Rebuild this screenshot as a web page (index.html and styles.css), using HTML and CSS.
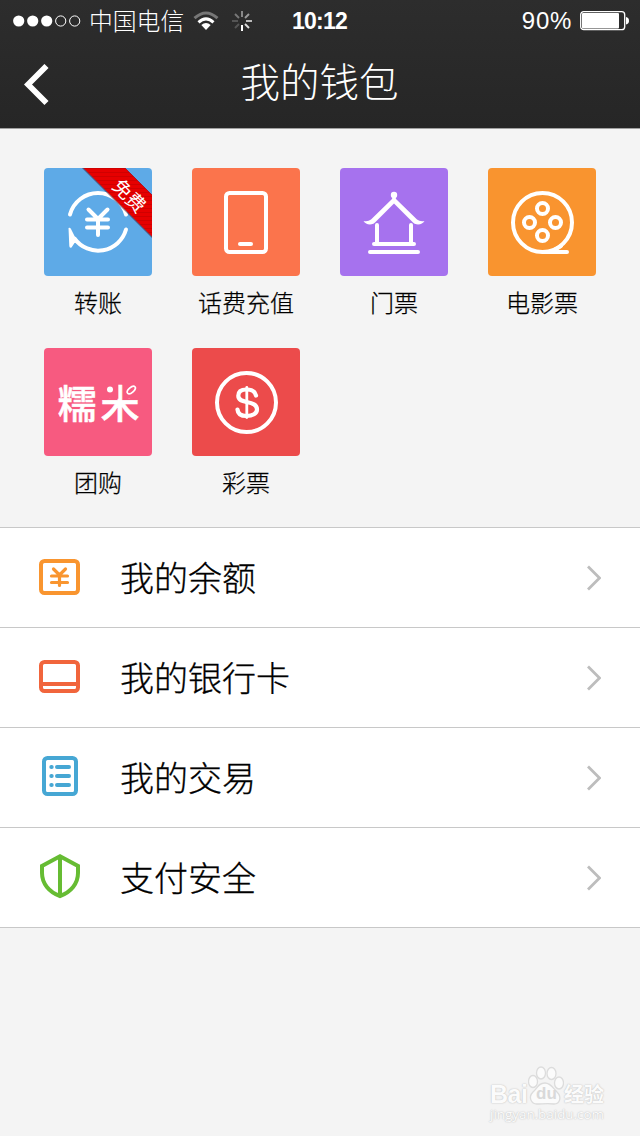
FILE: index.html
```html
<!DOCTYPE html>
<html lang="zh-CN">
<head>
<meta charset="utf-8">
<title>我的钱包</title>
<link rel="stylesheet" href="styles.css">
</head>
<body>
<div class="screen">
  <header class="header">
    <div class="status">
      <div class="status-left">
        <svg class="signal" width="68" height="12" viewBox="0 0 68 12"><g fill="#fff"><circle cx="5.700" cy="6" r="5.600"/><circle cx="19.700" cy="6" r="5.600"/><circle cx="33.700" cy="6" r="5.600"/></g><g fill="none" stroke="#fff"><circle cx="47.700" cy="6" r="5.100"/><circle cx="61.700" cy="6" r="5.100"/></g></svg>
        <span class="carrier">中国电信</span>
        <svg class="wifi" width="26" height="20" viewBox="0 0 26 20"><g fill="none" stroke="#fff" stroke-width="3"><path d="M1.500 7.200Q13-3.200 24.500 7.200" stroke="#777"/><path d="M5.500 11.300Q13 4.500 20.500 11.300"/></g><path d="M8.300 14Q13 10 17.700 14L13 19Z" fill="#fff"/></svg>
        <svg class="spinner" width="20" height="20" viewBox="0 0 20 20"><g stroke-width="2"><path d="M10 0v6" stroke="#888"/><path d="M17 3l-4 4" stroke="#999"/><path d="M20 10h-6" stroke="#bbb"/><path d="M17 17l-4-4" stroke="#ddd"/><path d="M10 20v-6" stroke="#fff"/><path d="M3 17l4-4M0 10h6" stroke="#555"/><path d="M3 3l4 4" stroke="#777"/></g></svg>
      </div>
      <span class="time">10:12</span>
      <div class="status-right">
        <span class="percent">90%</span>
        <svg width="50" height="20" viewBox="0 0 50 20"><rect x=".7" y=".7" width="44" height="18" rx="3" fill="none" stroke="#fff" stroke-width="1.300"/><rect x="2" y="2" width="37" height="15.500" rx="1" fill="#fff"/><path d="M46 6q3 .5 3 3.700t-3 3.700z" fill="#fff"/></svg>
      </div>
    </div>
    <div class="navbar">
      <svg class="back" width="26" height="42" viewBox="0 0 26 42"><path d="M22.500 2L4 20.500L22.500 39" fill="none" stroke="#fff" stroke-width="5.800"/></svg>
      <h1 class="title">我的钱包</h1>
      <span class="nav-space"></span>
    </div>
  </header>

  <main>
    <section class="grid">
      <div class="item">
        <div class="tile blue">
          <svg viewBox="0 0 108 108"><g fill="none" stroke="#fff" stroke-width="4" stroke-linecap="round" stroke-linejoin="round"><path d="M26 46.500A29 29 0 0 1 82 46.500"/><path d="M82 61.500A29 29 0 0 1 30.500 70.500"/><path d="M44.500 41.500L54 51L63.500 41.500M43 51.500H64M43 59.500H64M54 51V67"/></g><path d="M24.500 60Q26 59 27 61L31 69L35 74L30.500 75L27.500 79.500Q25.500 80.500 25.300 78Z" fill="#fff"/></svg>
          <svg class="ribbon" viewBox="0 0 108 108"><defs><pattern id="lines" width="4" height="4" patternUnits="userSpaceOnUse"><rect width="4" height="4" fill="#e60000"/><rect width="4" height="1" fill="#d00000"/></pattern></defs><path d="M38 0H81L108 27V70Z" fill="#4d1f35" opacity=".6"/><path d="M39.500 0H81L108 27V68.500Z" fill="url(#lines)"/><path d="M81 0L108 27" stroke="#a8182a"/></svg>
          <span class="ribbon-text">免费</span>
        </div>
        <span class="label">转账</span>
      </div>
      <div class="item">
        <div class="tile coral"><svg viewBox="0 0 108 108"><rect x="34" y="25" width="40" height="59" rx="3.500" fill="none" stroke="#fff" stroke-width="4"/><path d="M48 76H59" stroke="#fff" stroke-width="4" stroke-linecap="round"/></svg></div>
        <span class="label">话费充值</span>
      </div>
      <div class="item">
        <div class="tile purple"><svg viewBox="0 0 108 108"><circle cx="54" cy="27" r="3.200" fill="#fff"/><path d="M52.800 28H55.200L56 31L77 51.500Q80 54 84.500 53Q82 57 76.500 56.300Q74.500 56 73 54.500L54 35.500L35 54.500Q33.500 56 31.500 56.300Q26 57 23.500 53Q28 54 31 51.500L52 31Z" fill="#fff"/><path d="M37 57V76M71 57V76M34 76H74M30 84H78" fill="none" stroke="#fff" stroke-width="4" stroke-linecap="round"/></svg></div>
        <span class="label">门票</span>
      </div>
      <div class="item">
        <div class="tile orange"><svg viewBox="0 0 108 108"><g fill="none" stroke="#fff" stroke-width="4" stroke-linecap="round"><circle cx="54.500" cy="54.500" r="29.500"/><circle cx="54.500" cy="40.500" r="5.500"/><circle cx="41.500" cy="54.500" r="5.500"/><circle cx="67.500" cy="54.500" r="5.500"/><circle cx="54.500" cy="67.500" r="5.500"/><path d="M55 84H79M66 82L73 78"/></g></svg></div>
        <span class="label">电影票</span>
      </div>
      <div class="item">
        <div class="tile pink"><span class="nuomi">糯米</span><svg class="leaf" viewBox="0 0 108 108"><path d="M58 34H74.300V50.800H58ZM79.300 34H98V50.800H79.300Z" fill="#f75a80"/><circle cx="66" cy="41.500" r="3" fill="#fff"/><ellipse cx="87.300" cy="42" rx="4.900" ry="2.500" transform="rotate(-42 87.300 42)" fill="none" stroke="#fff" stroke-width="1.700"/></svg></div>
        <span class="label">团购</span>
      </div>
      <div class="item">
        <div class="tile red"><svg viewBox="0 0 108 108"><g fill="none" stroke="#fff" stroke-linecap="round"><circle cx="54.500" cy="54.500" r="29.500" stroke-width="4"/><path d="M54.800 39.500V69.500" stroke-width="2.800"/><path d="M64 47.500C63 43 59.500 41.500 54.500 41.500C49 41.500 46.300 44 46.300 47.800C46.300 52 50 53 54.500 54C60.500 55.300 65 56.500 65 61.500C65 65.500 60.500 68 54.500 68C49 68 45.800 65.500 45.500 61.500" stroke-width="4.200"/></g></svg></div>
        <span class="label">彩票</span>
      </div>
    </section>

    <section class="list">
      <div class="row">
        <svg class="row-icon" viewBox="0 0 48 49"><g fill="none" stroke="#f9952f" stroke-width="4"><rect x="5" y="8" width="37" height="32" rx="3.500"/><path d="M17.500 16L23.500 22L29.500 16M15.500 23H31.500M15.500 29.500H31.500M23.500 22V32.500" stroke-width="3.200" stroke-linecap="round"/></g></svg>
        <span class="row-text">我的余额</span>
        <svg class="chevron" viewBox="0 0 14 26"><path d="M1 1.500L12.500 13L1 24.500"/></svg>
      </div>
      <div class="row">
        <svg class="row-icon" viewBox="0 0 48 49"><g fill="none" stroke="#f1653c" stroke-width="4"><rect x="5" y="9" width="37" height="29" rx="3.500"/><path d="M5 31H42"/></g></svg>
        <span class="row-text">我的银行卡</span>
        <svg class="chevron" viewBox="0 0 14 26"><path d="M1 1.500L12.500 13L1 24.500"/></svg>
      </div>
      <div class="row">
        <svg class="row-icon" viewBox="0 0 48 49"><g fill="none" stroke="#46a7d4" stroke-width="4" stroke-linecap="round"><rect x="8" y="5" width="32" height="36" rx="3.500"/><path d="M15.300 14h.4M15.300 23h.4M15.300 32h.4M21 14H33M21 23H33M21 32H33"/></g></svg>
        <span class="row-text">我的交易</span>
        <svg class="chevron" viewBox="0 0 14 26"><path d="M1 1.500L12.500 13L1 24.500"/></svg>
      </div>
      <div class="row">
        <svg class="row-icon" viewBox="0 0 48 49"><path d="M24 3.200L42 13V20C42 30.500 35 39 24 43C13 39 6 30.500 6 20V13ZM24 3V43" fill="none" stroke="#66bc33" stroke-width="4"/></svg>
        <span class="row-text">支付安全</span>
        <svg class="chevron" viewBox="0 0 14 26"><path d="M1 1.500L12.500 13L1 24.500"/></svg>
      </div>
    </section>
  </main>

  <footer class="watermark">
    <div class="brand">
      <span class="bai">Bai</span>
      <div class="paw">
        <svg viewBox="0 0 36 40"><g fill="#fbfbfb" stroke="#dcdcdc" stroke-width="1.300"><ellipse cx="5" cy="15.500" rx="4.500" ry="6"/><ellipse cx="13" cy="7" rx="4.500" ry="6"/><ellipse cx="23.500" cy="7.500" rx="4.500" ry="6"/><ellipse cx="31" cy="17" rx="4.500" ry="6"/><path d="M17 17C10 17 10 22 5 26C0 31 3 38 9 38C14 38 20 37 26 38C32 38 34 31 29 26C25 22 23 17 17 17Z"/></g></svg>
        <span class="du">du</span>
      </div>
      <span class="jingyan">经验</span>
    </div>
    <div class="url">jingyan.baidu.com</div>
  </footer>
</div>
</body>
</html>
```

FILE: styles.css
```css
* { box-sizing: border-box; }
body { margin: 0; font-family: "Liberation Sans", "Noto Sans CJK SC", sans-serif; }
svg { display: block; flex: none; }
.screen { width: 640px; height: 1136px; background: #f4f4f4; display: flex; flex-direction: column; overflow: hidden; position: relative; }
.header { height: 129px; background: linear-gradient(#2d2d2d, #262626); border-bottom: 1px solid #a0a0a0; color: #fff; }
.status { height: 41px; display: grid; grid-template-columns: 1fr auto 1fr; align-items: center; padding: 0 10px 0 13px; }
.status-left, .status-right { display: flex; align-items: center; }
.status-right { justify-content: flex-end; }
.carrier { margin: 0 0 1px 8px; width: 96px; font: 300 23.8px/40px "Noto Sans CJK SC", sans-serif; white-space: nowrap; }
.wifi { margin-left: 8px; }
.spinner { margin-left: 13px; }
.time { font: 700 23px/40px "Liberation Sans", sans-serif; letter-spacing: -0.8px; margin: 0 4px 0 0; }
.percent { font-size: 24px; line-height: 40px; margin: 0 8px 0 0; letter-spacing: 0.7px; }
.navbar { height: 87px; display: flex; align-items: center; justify-content: space-between; padding: 0 25px 0 24px; }
.title { margin: 0; font: 300 39.5px/80px "Noto Sans CJK SC", sans-serif; padding-bottom: 9px; }
.nav-space { width: 26px; }
.grid { height: 398px; padding: 39px 44px 0; display: grid; grid-template-columns: repeat(4, 108px); grid-auto-rows: 180px; column-gap: 40px; align-content: start; }
.item { display: flex; flex-direction: column; align-items: center; }
.tile { position: relative; width: 108px; height: 108px; border-radius: 4px; overflow: hidden; display: flex; align-items: center; justify-content: center; }
.tile svg { width: 108px; height: 108px; }
.blue { background: #5eaae7; }
.coral { background: #fb744c; }
.purple { background: #a672ee; }
.orange { background: #f9942f; }
.pink { background: #f75a80; }
.red { background: #ec4b4b; }
.ribbon, .leaf { position: absolute; left: 0; top: 0; }
.ribbon-text { position: absolute; left: 67px; top: 16px; width: 38px; text-align: center; font: 400 19px/22px "Noto Sans CJK SC", sans-serif; color: #fff; transform: rotate(45deg); }
.nuomi { font: 500 39px/60px "Noto Sans CJK SC", sans-serif; color: #fff; white-space: nowrap; letter-spacing: 4px; margin: 0 -5px 2px 0; -webkit-text-stroke: 0.5px #fff; }
.label { font: 300 24px/36px "Noto Sans CJK SC", sans-serif; color: #000; margin-top: 8px; white-space: nowrap; -webkit-text-stroke: 0.25px #000; }
.list { border-bottom: 1px solid #c8c8c8; background: #fff; }
.row { height: 100px; border-top: 1px solid #c8c8c8; display: flex; align-items: center; padding: 0 39px 0 36px; }
.row-icon { width: 48px; height: 49px; }
.row-text { flex: 1; margin-left: 36px; padding-bottom: 2px; font: 300 34px/50px "Noto Sans CJK SC", sans-serif; color: #000; -webkit-text-stroke: 0.3px #000; }
.chevron { width: 14px; height: 26px; fill: none; stroke: #bdbdbd; stroke-width: 2.8; }
.watermark { position: absolute; left: 490px; top: 1066px; width: 120px; color: #fbfbfb; text-shadow: 0 0 1px #c4c4c4, 0 0 2px #ccc; }
.brand { display: flex; align-items: flex-end; height: 40px; }
.bai { width: 38px; font: 700 25px/23px "Liberation Sans", sans-serif; letter-spacing: -0.5px; }
.paw { position: relative; width: 36px; height: 40px; }
.paw svg { width: 36px; height: 40px; }
.du { position: absolute; left: 8px; top: 17px; font: 700 17px/22px "Liberation Sans", sans-serif; color: #d9d9d9; text-shadow: none; }
.jingyan { font: 700 20px/24px "Noto Sans CJK SC", sans-serif; white-space: nowrap; }
.url { font: 400 13.4px/16px "Open Sans", sans-serif; white-space: nowrap; }
```
